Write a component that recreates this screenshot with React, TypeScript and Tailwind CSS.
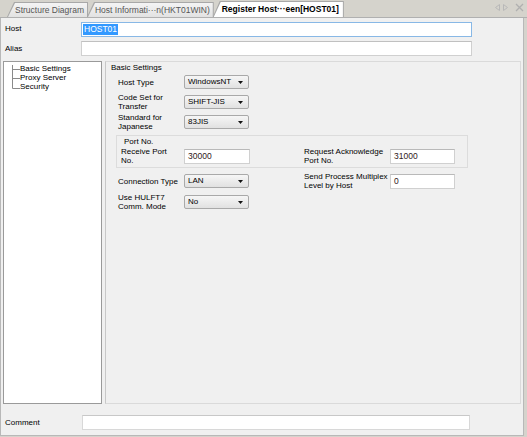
import React from "react";

const Select = ({ value }: { value: string }) => (
  <div className="w-[65px] h-[14px] flex items-center justify-between border border-[#a9a9a9] rounded-[2px] bg-gradient-to-b from-[#f6f6f6] to-[#e1e1e1] pl-[3px] pr-[5px]">
    <span className="leading-[10px]">{value}</span>
    <svg width="5" height="3" viewBox="0 0 5 3">
      <path d="M0 0h5L2.5 3z" fill="#111" />
    </svg>
  </div>
);

const TextBox = ({ value, w }: { value: string; w: string }) => (
  <div className={`${w} h-[15px] flex items-center bg-white border border-[#d0d0d0] border-t-[#b9b9b9] pl-[3px] text-[#302020] text-[8.5px]`}>
    {value}
  </div>
);

const Label = ({ lines, w }: { lines: string[]; w: string }) => (
  <div className={`${w} flex flex-col leading-[9px]`}>
    {lines.map((l) => (
      <span key={l}>{l}</span>
    ))}
  </div>
);

const Tab = ({ label, active }: { label: string; active?: boolean }) => (
  <div
    className={`${active ? "h-[16px]" : "h-[15px]"} pl-[1px] pt-[1px] pr-[1px] bg-[#a8a8a8] [clip-path:polygon(7px_0,100%_0,100%_100%,0_100%)] -mr-[1px]`}
  >
    <div
      className={`h-full flex items-center pl-[7px] pr-[3px] [clip-path:polygon(7px_0,100%_0,100%_100%,0_100%)] ${
        active
          ? "bg-white font-bold text-black pl-[8px] pr-[4px]"
          : "bg-gradient-to-b from-[#f4f4f4] to-[#e2e2e2] text-[#555]"
      }`}
    >
      {label}
    </div>
  </div>
);

export default function App() {
  return (
    <div className="w-[527px] h-[437px] flex flex-col bg-[#d5d3cc] text-[8px] text-black font-['Liberation_Sans',Arial,sans-serif] overflow-hidden">
      {/* Tab bar */}
      <div className="h-[18px] flex items-end justify-between border-b border-[#b0b0b0] pl-[7px] pr-[3px] text-[8.5px]">
        <div className="flex items-end">
          <Tab label="Structure Diagram" />
          <Tab label="Host Informati···n(HKT01WIN)" />
          <Tab label="Register Host···een[HOST01]" active />
        </div>
        <div className="flex items-center gap-[3px] h-full pb-[2px]">
          <svg width="5" height="7" viewBox="0 0 5 7">
            <path d="M4.5 0.5L0.5 3.5L4.5 6.5z" fill="none" stroke="#b8b8b8" />
          </svg>
          <svg width="5" height="7" viewBox="0 0 5 7">
            <path d="M0.5 0.5L4.5 3.5L0.5 6.5z" fill="none" stroke="#b8b8b8" />
          </svg>
          <svg width="9" height="9" viewBox="0 0 9 9" className="ml-[4px]">
            <path d="M1 1L8 8M8 1L1 8" stroke="#b0b0b0" strokeWidth="1.3" />
          </svg>
        </div>
      </div>

      {/* Content */}
      <div className="flex-1 flex flex-col bg-[#f0f0f0] border-x border-b border-[#b8b8b8] mr-[3px] mb-[1px] pt-[4px]">
        {/* Host */}
        <div className="flex items-start h-[15px]">
          <div className="w-[80px] pl-[4px] mt-[2px] leading-[10px]">Host</div>
          <div className="w-[391px] h-[15px] bg-white border border-[#88b8e6] flex items-center pl-[1px]">
            <span className="bg-[#3399ff] text-white px-[1px] leading-[11px] text-[8.5px]">HOST01</span>
          </div>
        </div>
        {/* Alias */}
        <div className="flex items-start h-[15px] mt-[4px]">
          <div className="w-[80px] pl-[4px] mt-[3px] leading-[10px]">Alias</div>
          <div className="w-[391px] h-[15px] bg-white border border-[#d0d0d0] border-t-[#c0c0c0]" />
        </div>

        {/* Main */}
        <div className="flex h-[343px] mt-[5px] pl-[2px] gap-[3px] pr-[2px]">
          {/* Tree */}
          <div className="w-[99px] h-full bg-white border border-[#9a9a9a] pt-[2px] pl-[7px] flex">
            <svg width="9" height="28" viewBox="0 0 9 28" className="mt-[1px]">
              <path d="M1.5 0V23.5M1.5 4.5H9M1.5 13.5H9M1.5 23.5H9" stroke="#8a8a8a" strokeWidth="1" fill="none" />
            </svg>
            <div className="flex flex-col leading-[9px] text-[8px]">
              <span>Basic Settings</span>
              <span>Proxy Server</span>
              <span>Security</span>
            </div>
          </div>

          {/* Settings panel */}
          <div className="flex-1 h-full border border-[#dadada] border-l-[#c8c8c8] pt-[1px]">
            <div className="leading-[9px] pl-[5px]">Basic Settings</div>
            <div className="pl-[10px] w-[362px]">
              <div className="h-[20px] flex items-center pl-[2px]">
                <Label lines={["Host Type"]} w="w-[66px]" />
                <Select value="WindowsNT" />
              </div>
              <div className="h-[20px] flex items-center pl-[2px]">
                <Label lines={["Code Set for", "Transfer"]} w="w-[66px]" />
                <Select value="SHIFT-JIS" />
              </div>
              <div className="h-[20px] flex items-center pl-[2px]">
                <Label lines={["Standard for", "Japanese"]} w="w-[66px]" />
                <Select value="83JIS" />
              </div>

              {/* Port No. group */}
              <div className="mt-[3px] border border-[#dcdcdc] pl-[4px] pb-[1px]">
                <div className="pl-[3px] leading-[9px] mt-[1px]">Port No.</div>
                <div className="h-[20px] flex items-center">
                  <Label lines={["Receive Port", "No."]} w="w-[63px]" />
                  <TextBox value="30000" w="w-[66px]" />
                  <div className="w-[54px]" />
                  <Label lines={["Request Acknowledge", "Port No."]} w="w-[86px]" />
                  <TextBox value="31000" w="w-[65px]" />
                </div>
              </div>

              <div className="h-[20px] mt-[3px] flex items-center pl-[2px]">
                <Label lines={["Connection Type"]} w="w-[66px]" />
                <Select value="LAN" />
                <div className="w-[55px]" />
                <Label lines={["Send Process Multiplex", "Level by Host"]} w="w-[86px]" />
                <TextBox value="0" w="w-[65px]" />
              </div>
              <div className="h-[20px] mt-[1px] flex items-center pl-[2px]">
                <Label lines={["Use HULFT7", "Comm. Mode"]} w="w-[66px]" />
                <Select value="No" />
              </div>
            </div>
          </div>
        </div>

        {/* Comment */}
        <div className="flex items-start h-[15px] mt-[11px]">
          <div className="w-[81px] pl-[4px] mt-[3px] leading-[10px]">Comment</div>
          <div className="w-[388px] h-[15px] bg-white border border-[#d8d8d8] border-t-[#c8c8c8]" />
        </div>
      </div>
    </div>
  );
}
